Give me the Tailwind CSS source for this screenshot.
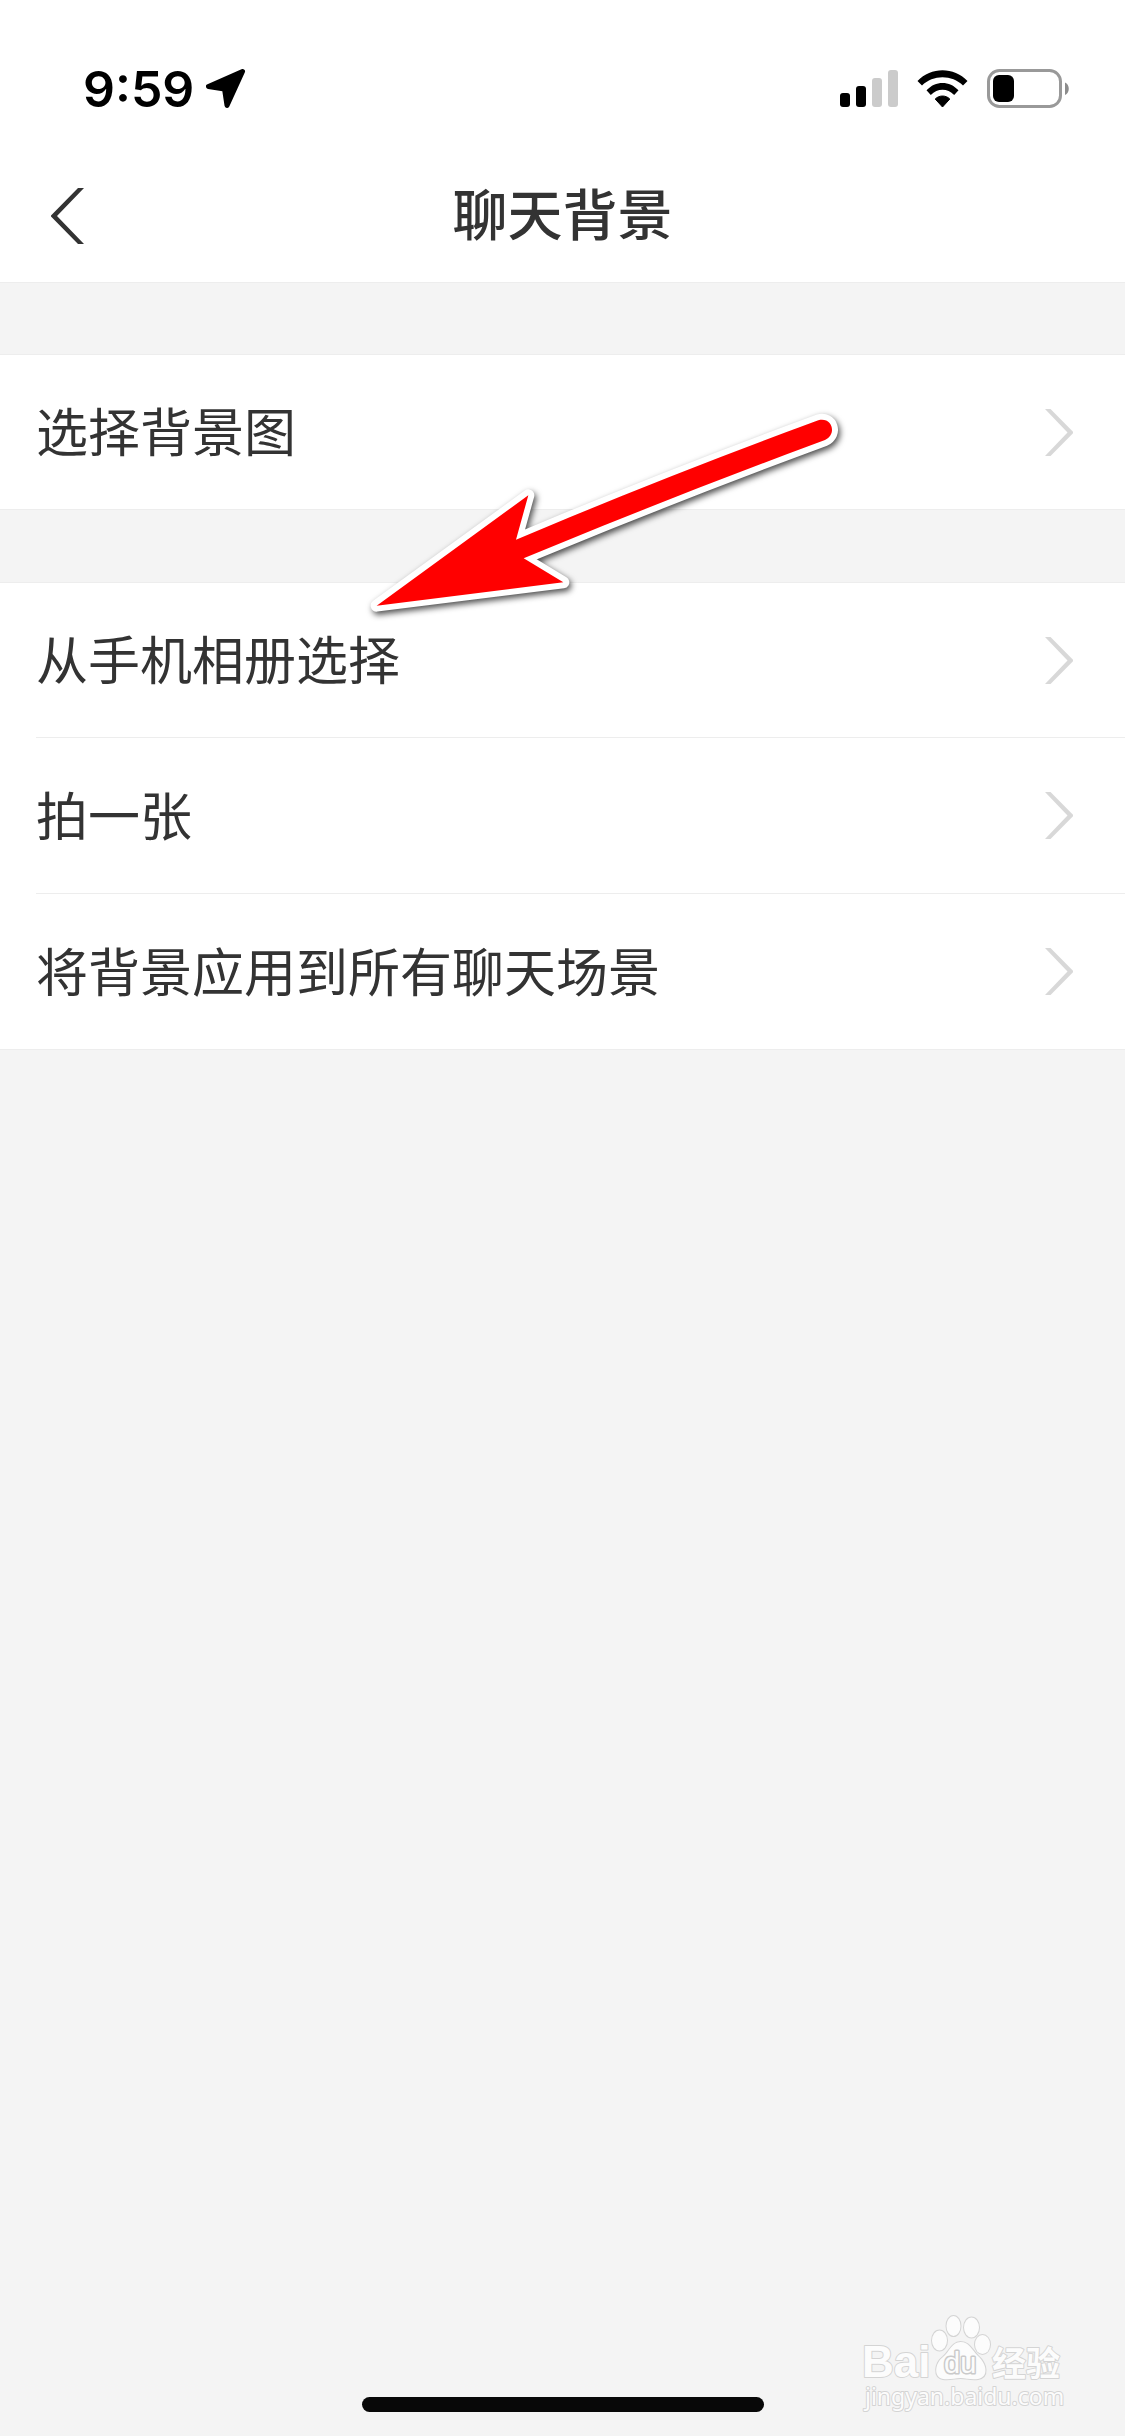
<!DOCTYPE html>
<html lang="zh-CN">
<head>
<meta charset="utf-8">
<meta name="viewport" content="width=device-width, initial-scale=1">
<title>聊天背景</title>
<script src="https://cdn.jsdelivr.net/npm/@tailwindcss/browser@4"></script>
</head>
<body class="relative flex min-h-screen flex-col bg-[#f4f4f4] font-['Noto_Sans_CJK_SC',sans-serif] text-[#333333]">
  <header class="border-b border-[#ededed] bg-white">
    <!-- Status bar -->
    <div class="flex h-[148px] items-center justify-between pt-[30px] pr-[55px] pl-[83px] text-black">
      <div class="flex items-center gap-3">
        <span class="font-['Inter',sans-serif] text-[50px] leading-none font-semibold">9:59</span>
        <svg class="h-10 w-10" viewBox="0 0 40 40" aria-hidden="true">
          <path d="M36.500 2.500 L2.500 17.500 L18.500 20 L21 36.500 Z" fill="#000" stroke="#000" stroke-width="5" stroke-linejoin="round"/>
        </svg>
      </div>
      <div class="flex items-center gap-[18px]">
        <svg class="h-10 w-[59px]" viewBox="0 0 59 40" aria-hidden="true">
          <rect x="0" y="24" width="10" height="14" rx="3"/>
          <rect x="16" y="17" width="10" height="21" rx="3"/>
          <rect x="32" y="9" width="10" height="29" rx="3" fill="#cbcbcb"/>
          <rect x="48" y="1" width="10" height="37" rx="3" fill="#cbcbcb"/>
        </svg>
        <svg class="h-10 w-[52px]" viewBox="0 0 52 40" aria-hidden="true">
          <path d="M0.500 12 C14 -2.500 37 -2.500 50.500 12 L46 16.500 C35 5.500 16 5.500 5 16.500 Z"/>
          <path d="M9.500 21.300 C18.500 11.500 32.500 11.500 41.500 21.300 L37.200 26 C30.500 19 20.500 19 13.800 26 Z"/>
          <path d="M18.200 30 C22.200 26 28.800 26 32.800 30 L25.500 38 Z" stroke="#000" stroke-linejoin="round"/>
        </svg>
        <svg class="h-10 w-[83px]" viewBox="0 0 83 40" aria-hidden="true">
          <rect x="1.500" y="1.500" width="72" height="36" rx="11" fill="none" stroke="#999" stroke-width="3"/>
          <rect x="6" y="6" width="21" height="27" rx="6"/>
          <path d="M78 13.500 C83 15.500 83 24 78 26 Z" fill="#8c8c8c"/>
        </svg>
      </div>
    </div>
    <!-- Title bar -->
    <div class="grid h-[134px] grid-cols-[1fr_auto_1fr] items-center">
      <button type="button" aria-label="返回" class="justify-self-start pt-0.5 pl-[51px]">
        <svg class="h-14 w-[33px]" viewBox="0 0 33 56" aria-hidden="true">
          <path d="M27 0 H33 L6 28 L33 56 H27 L0 28.500 V27.500 Z" fill="#333"/>
        </svg>
      </button>
      <h1 class="pb-2 text-[55px] leading-none font-medium">聊天背景</h1>
    </div>
  </header>

  <main class="flex flex-col gap-[72px] pt-[71px]">
    <ul class="border-y border-[#ededed] bg-white">
      <li class="pl-9">
        <a href="#presets" class="flex h-[154px] items-center justify-between pr-[52px]">
          <span class="pb-1 text-[52px] leading-none">选择背景图</span>
          <svg class="h-[47px] w-7" viewBox="0 0 28 47" aria-hidden="true"><path d="M0 0 H5.500 L28 22.700 V24.300 L5.500 47 H0 L22.500 23.500 Z" fill="#d8d8d8"/></svg>
        </a>
      </li>
    </ul>
    <ul class="border-y border-[#ededed] bg-white">
      <li class="pl-9">
        <a href="#album" class="flex h-[155px] items-center justify-between border-b border-[#ededed] pr-[52px]">
          <span class="pb-1 text-[52px] leading-none">从手机相册选择</span>
          <svg class="h-[47px] w-7" viewBox="0 0 28 47" aria-hidden="true"><path d="M0 0 H5.500 L28 22.700 V24.300 L5.500 47 H0 L22.500 23.500 Z" fill="#d8d8d8"/></svg>
        </a>
      </li>
      <li class="pl-9">
        <a href="#camera" class="flex h-[156px] items-center justify-between border-b border-[#ededed] pr-[52px]">
          <span class="pb-1 text-[52px] leading-none">拍一张</span>
          <svg class="h-[47px] w-7" viewBox="0 0 28 47" aria-hidden="true"><path d="M0 0 H5.500 L28 22.700 V24.300 L5.500 47 H0 L22.500 23.500 Z" fill="#d8d8d8"/></svg>
        </a>
      </li>
      <li class="pl-9">
        <a href="#apply-all" class="flex h-[155px] items-center justify-between pr-[52px]">
          <span class="pb-1 text-[52px] leading-none">将背景应用到所有聊天场景</span>
          <svg class="h-[47px] w-7" viewBox="0 0 28 47" aria-hidden="true"><path d="M0 0 H5.500 L28 22.700 V24.300 L5.500 47 H0 L22.500 23.500 Z" fill="#d8d8d8"/></svg>
        </a>
      </li>
    </ul>
  </main>

  <!-- Home indicator -->
  <div class="mt-auto flex justify-center pb-6">
    <div class="h-[15px] w-[402px] rounded-full bg-[#080808]"></div>
  </div>

  <!-- Pointer arrow over the list -->
  <svg class="pointer-events-none absolute top-[390px] left-[340px] h-[240px] w-[520px] drop-shadow-[2px_3px_3px_rgba(0,0,0,0.7)]" viewBox="0 0 1560 720" aria-hidden="true">
    <path d="M110 647 L565 316 L528 449 Q980 258 1435 91 C1477 80 1492 133 1455 150 Q1000 318 551 505 L670 577 Z" fill="none" stroke="#fff" stroke-width="36" stroke-linejoin="round"/>
    <path d="M110 647 L565 316 L528 449 Q980 258 1435 91 C1477 80 1492 133 1455 150 Q1000 318 551 505 L670 577 Z" fill="#f00"/>
  </svg>

  <!-- Watermark -->
  <svg class="pointer-events-none absolute right-[25px] bottom-0 h-[146px] w-[260px]" viewBox="0 0 260 146" role="img" aria-label="Baidu 经验">
    <g fill="#fcfcfc" stroke="#d4d4d4" stroke-width="2" stroke-linejoin="round" paint-order="stroke">
      <text x="22" y="87" font-family="Liberation Sans, sans-serif" font-size="44" font-weight="700">Bai</text>
      <ellipse cx="99.500" cy="50.500" rx="7.500" ry="10"/>
      <ellipse cx="113.500" cy="36" rx="7" ry="10"/>
      <ellipse cx="131.500" cy="37.500" rx="7.500" ry="10"/>
      <ellipse cx="142.500" cy="54.500" rx="7.500" ry="9.500"/>
      <path d="M120.500 52 C129 52 132 60 138 66 C147 74 149 87 138 89 C131 90 126 88 120.500 88 C115 88 110 90 103 89 C93 87 95 73 103 67 C110 61 112 52 120.500 52 Z"/>
      <text x="104" y="83" font-family="Liberation Sans, sans-serif" font-size="29" stroke="#cacaca" stroke-width="3">du</text>
      <text x="152" y="86" font-family="Noto Sans CJK SC, sans-serif" font-size="34" font-weight="700">经验</text>
      <text x="25" y="115" font-family="Noto Sans, sans-serif" font-size="23">jingyan.baidu.com</text>
    </g>
  </svg>
</body>
</html>
